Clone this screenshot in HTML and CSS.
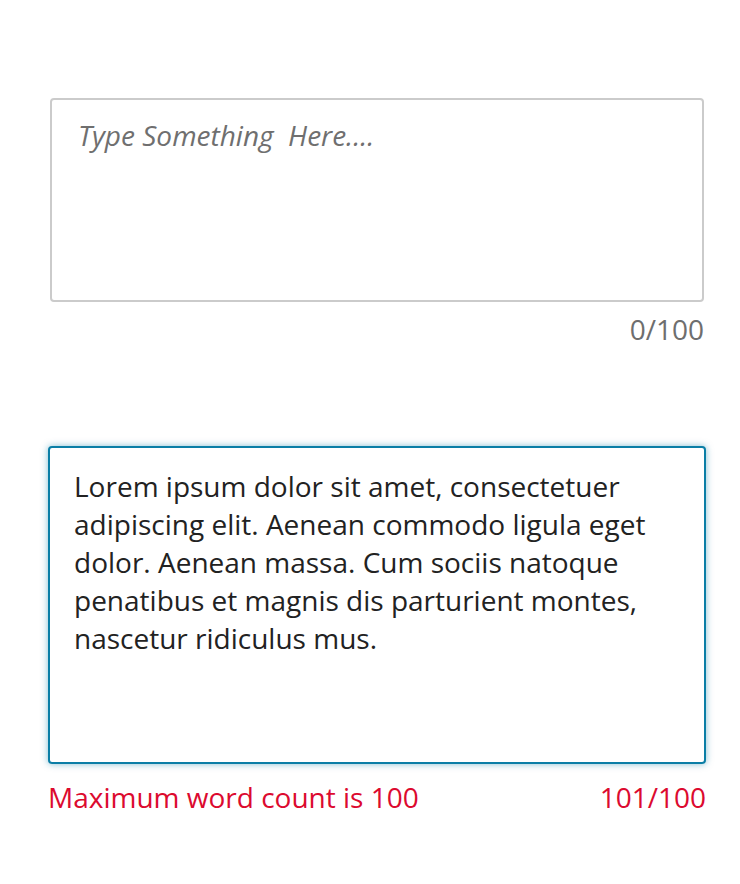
FILE: index.html
```html
<!DOCTYPE html>
<html lang="en">
<head>
<meta charset="utf-8">
<title>Text areas</title>
<link rel="stylesheet" href="styles.css">
</head>
<body>
<main class="page">
  <section class="field field--empty">
    <div class="box box--empty">
      <span class="placeholder">Type Something&nbsp; Here....</span>
    </div>
    <div class="meta">
      <span class="counter">0/100</span>
    </div>
  </section>

  <section class="field field--error">
    <div class="box box--focused">Lorem ipsum dolor sit amet, consectetuer adipiscing elit. Aenean commodo ligula eget dolor. Aenean massa. Cum sociis natoque penatibus et magnis dis parturient montes, nascetur ridiculus mus.</div>
    <div class="meta meta--error">
      <span class="error-msg">Maximum word count is 100</span>
      <span class="counter counter--error">101/100</span>
    </div>
  </section>
</main>
</body>
</html>
```
FILE: styles.css
```css
* { box-sizing: border-box; }

html, body {
  margin: 0;
  padding: 0;
  background: #ffffff;
}

body {
  font-family: "Open Sans", "Noto Sans", sans-serif;
  font-size: 28px;
  line-height: 38px;
  color: #222222;
}

.page {
  display: flex;
  flex-direction: column;
  padding-top: 98px;
}

.field--empty {
  margin: 0 36px 0 50px;
}

.field--error {
  margin: 98px 34px 0 48px;
}

.box {
  border-radius: 4px;
  background: #fff;
}

.box--empty {
  height: 204px;
  border: 2px solid #cbcbcb;
  padding: 16px 24px 0 26px;
}

.placeholder {
  font-style: italic;
  color: #6f6f6f;
}

.box--focused {
  height: 318px;
  border: 2px solid #0a7ea6;
  box-shadow: 0 0 7px rgba(10, 126, 166, 0.5);
  padding: 19px 24px 0 24px;
  color: #222222;
}

.meta {
  display: flex;
  justify-content: flex-end;
  margin-top: 8px;
}

.meta--error {
  justify-content: space-between;
  margin-top: 14px;
}

.counter {
  color: #6e6e6e;
}

.error-msg,
.counter--error {
  color: #dc0a2f;
}
```
